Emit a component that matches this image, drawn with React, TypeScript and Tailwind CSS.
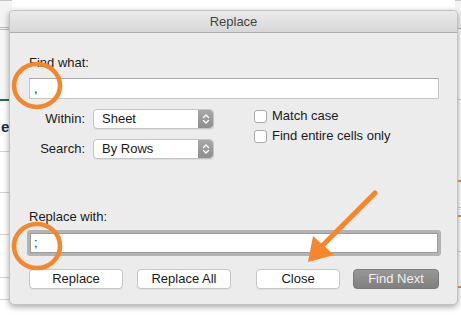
import React from "react";

function Stepper() {
  return (
    <div className="w-[15px] h-full rounded-r-[4px] bg-gradient-to-b from-[#a8a8a8] to-[#8e8e8e] flex items-center justify-center">
      <svg width="8" height="12" viewBox="0 0 8 12" fill="none" stroke="#ffffff" strokeWidth="1.3" strokeLinecap="round" strokeLinejoin="round">
        <path d="M1.5 4.5 L4 2 L6.5 4.5" />
        <path d="M1.5 7.5 L4 10 L6.5 7.5" />
      </svg>
    </div>
  );
}

function Select({ value }: { value: string }) {
  return (
    <div className="ml-[8px] w-[121px] h-[20px] flex bg-white rounded-[4px] border border-[#c4c4c4] shadow-[0_1px_0_rgba(0,0,0,0.06)]">
      <div className="flex-1 pl-[8px] leading-[18px] text-[#1a1a1a]">{value}</div>
      <Stepper />
    </div>
  );
}

function Checkbox({ label }: { label: string }) {
  return (
    <div className="h-[14px] flex items-center">
      <div className="w-[13px] h-[13px] bg-white rounded-[3px] border border-[#a9a9a9]" />
      <span className="ml-[5px] leading-[14px] text-[#1a1a1a]">{label}</span>
    </div>
  );
}

function Button({ label, w, primary }: { label: string; w: string; primary?: boolean }) {
  return (
    <div
      className={
        primary
          ? `${w} h-[20px] rounded-[4px] bg-gradient-to-b from-[#979797] to-[#7f7f7f] border border-[#7a7a7a] text-[#efefef] text-center leading-[18px]`
          : `${w} h-[20px] rounded-[4px] bg-white border border-[#c6c6c6] text-[#1a1a1a] text-center leading-[18px] shadow-[0_1px_0_rgba(0,0,0,0.05)]`
      }
    >
      {label}
    </div>
  );
}

export default function App() {
  return (
    <div className="relative w-[461px] h-[316px] overflow-hidden bg-white font-['Liberation_Sans',Arial,sans-serif] text-[13px]">
      {/* spreadsheet background */}
      <div className="absolute inset-0 flex justify-between">
        <div className="w-[12px] flex flex-col">
          <div className="h-[1px] bg-[#c8c8c8]" />
          <div className="h-[26px] bg-[#f4f4f4]" />
          <div className="h-[3px] border-y border-[#bdbdbd] bg-[#f0f0f0]" />
          <div className="h-[69px] bg-[#f6f6f6]" />
          <div className="h-[2px] bg-[#217346]" />
          <div className="h-[51px] bg-white border-b border-[#d4d4d4] flex items-center">
            <span className="text-[15px] font-bold text-[#1f2a44] leading-none pl-[1px]">e</span>
          </div>
          <div className="h-[41px] border-b border-[#d4d4d4]" />
          <div className="h-[42px] border-b border-[#d4d4d4]" />
          <div className="h-[43px] border-b border-[#d4d4d4]" />
          <div className="h-[22px] border-b border-[#d4d4d4]" />
        </div>
        <div className="w-[6px] flex flex-col">
          <div className="h-[1px] bg-[#c8c8c8]" />
          <div className="h-[28px] bg-[#f4f4f4] border-b border-[#bdbdbd]" />
          <div className="h-[71px] border-b border-[#d4d4d4]" />
          <div className="h-[82px] border-b-2 border-[#e89a3c]" />
          <div className="h-[26px] border-b border-[#d4d4d4]" />
          <div className="h-[9px] border-b-2 border-[#e89a3c]" />
          <div className="h-[35px] border-b border-[#d4d4d4]" />
          <div className="h-[36px] border-b-2 border-[#e89a3c]" />
        </div>
      </div>

      {/* dialog sheet */}
      <div className="absolute left-[9px] top-[10px] w-[449px] h-[295px] flex flex-col rounded-[5px] bg-[#ececec] border border-[#c2c2c2] shadow-[0_2px_6px_rgba(0,0,0,0.35)] overflow-hidden">
        <div className="h-[22px] shrink-0 bg-gradient-to-b from-[#ebebeb] to-[#d7d7d7] border-b border-[#adadad] text-center leading-[21px] text-[#444444]">
          Replace
        </div>
        <div className="flex flex-col pl-[19px] pr-[18px] pt-[22px] text-[#1a1a1a]">
          <div className="h-[16px] leading-[16px]">Find what:</div>
          <div className="mt-[7px] h-[21px] bg-white border border-[#c4c4c4] border-t-[#a9a9a9] pl-[4px] leading-[19px]">,</div>

          <div className="mt-[10px] flex">
            <div className="flex flex-col gap-[10px]">
              <div className="flex items-center">
                <div className="w-[56px] text-right">Within:</div>
                <Select value="Sheet" />
              </div>
              <div className="flex items-center">
                <div className="w-[56px] text-right">Search:</div>
                <Select value="By Rows" />
              </div>
            </div>
            <div className="ml-[40px] flex flex-col gap-[6px]">
              <Checkbox label="Match case" />
              <Checkbox label="Find entire cells only" />
            </div>
          </div>

          <div className="mt-[50px] h-[16px] leading-[16px]">Replace with:</div>
          <div className="mt-[5px] -mx-[2px] h-[26px] p-[3px] rounded-[3px] bg-[#b3b3b3]">
            <div className="h-full bg-white border border-[#9c9c9c] pl-[3px] leading-[18px]">;</div>
          </div>

          <div className="mt-[13px] flex">
            <Button label="Replace" w="w-[94px]" />
            <div className="ml-[14px]">
              <Button label="Replace All" w="w-[94px]" />
            </div>
            <div className="ml-[25px]">
              <Button label="Close" w="w-[84px]" />
            </div>
            <div className="ml-[13px]">
              <Button label="Find Next" w="w-[86px]" primary />
            </div>
          </div>
        </div>
      </div>

      {/* annotations */}
      <svg className="absolute inset-0 pointer-events-none" width="461" height="316" viewBox="0 0 461 316" fill="none">
        <ellipse cx="37" cy="85.5" rx="23" ry="21.5" stroke="#f6862b" strokeWidth="4.5" />
        <ellipse cx="37" cy="246" rx="23" ry="22" stroke="#f6862b" strokeWidth="4.5" />
        <line x1="375" y1="193" x2="320" y2="248" stroke="#f6862b" strokeWidth="5" strokeLinecap="round" />
        <polygon points="308,262 313,236 334,255" fill="#f6862b" />
      </svg>
    </div>
  );
}
